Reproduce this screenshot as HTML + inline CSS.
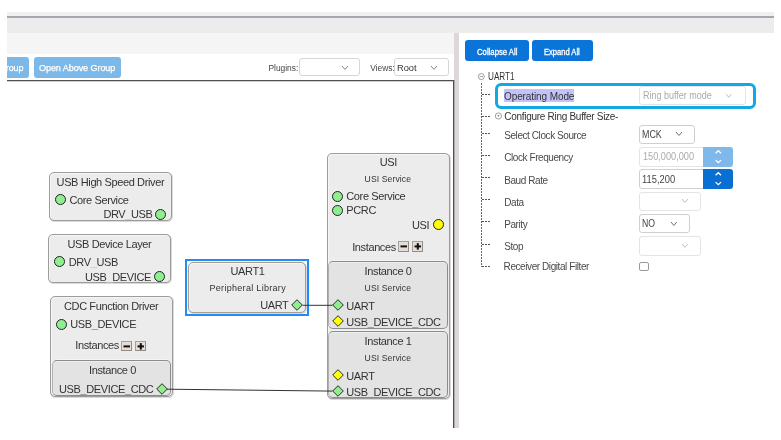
<!DOCTYPE html>
<html><head><meta charset="utf-8">
<style>
*{box-sizing:border-box;margin:0;padding:0}
html,body{width:781px;height:440px;overflow:hidden;background:#fff;will-change:transform;font-family:"Liberation Sans",sans-serif;position:relative}
.a{position:absolute}
.t{position:absolute;white-space:pre;line-height:1}
/* top band */
#band{left:7px;top:12px;width:767px;height:21px;background:#ececec}
#band .u{left:0;top:0;width:767px;height:4px;background:#f0f0f0}
#band .l{left:0;top:4px;width:767px;height:2px;background:#a6a6ae}
#tb{left:7px;top:33px;width:447px;height:21px;background:#f5f5f5}
#tb2{left:7px;top:54px;width:447px;height:26px;background:#fff}
#hl{left:7px;top:80px;width:447px;height:1px;background:#505050;box-shadow:0 1px 0 #d0d0d0}
#vl{left:453px;top:80px;width:1px;height:348px;background:#505050;box-shadow:1px 0 0 #aaa}
#split{left:454px;top:33px;width:5px;height:395px;background:#ddd7d7}
.btn{position:absolute;background:#7db9e8;border-radius:3px;color:#fff;font-size:9px;letter-spacing:-0.05px}
.dd{position:absolute;background:#fff;border:1px solid #d6d6d6;border-radius:3px}
.chev{position:absolute;width:5px;height:5px;border-right:1px solid #777;border-bottom:1px solid #777;transform:rotate(45deg)}
.lbl{position:absolute;white-space:pre;font-size:8.4px;color:#444;line-height:1}
/* nodes */
.node{position:absolute;background:#ececec;border:1px solid #9c9c9c;border-radius:5px;box-shadow:inset 1px 1px 0 #f6f6f6, 0.6px 0.6px 0 0.4px #dadada}
.inst{position:absolute;background:#e3e3e3;border:1px solid #8c8c8c;border-left-color:#b0b0b0;border-radius:5px;box-shadow:0 -1px 0 #f4f4f4, inset 0 1px 0 #eeeeee}
.nt{position:absolute;white-space:pre;font-size:11px;letter-spacing:-0.38px;color:#333;line-height:1}
.st{position:absolute;white-space:pre;font-size:8.6px;color:#333;line-height:1;letter-spacing:0.1px}
.pc{position:absolute;width:11px;height:11px;border-radius:50%;background:#90ee90;border:1.2px solid #222}
.py{background:#ffff00}
.pd{position:absolute;width:8px;height:8px;background:#90ee90;border:1px solid #333;transform:rotate(45deg)}
.pdy{background:#ffff00}
.ib{position:absolute;background:#e6ded6;border:1px solid #a8a098;border-right-color:#948c84;border-bottom-color:#948c84}
.ib svg{position:absolute;left:0;top:0}
/* right panel */
.rb{position:absolute;background:#0b74d8;border-radius:3px;color:#fff;font-size:7.3px;font-weight:bold;line-height:1}
.rl{position:absolute;white-space:pre;font-size:10px;letter-spacing:-0.42px;color:#4a4a4a;line-height:1}
.tv{position:absolute;border-left:1px dotted #333}
.th{position:absolute;border-top:1px dotted #333}
.rdd{position:absolute;background:#fff;border:1px solid #cfcfcf;border-radius:3px}
.rdd.dis{border-color:#e4e4e4}
.rv{position:absolute;white-space:pre;font-size:9.6px;letter-spacing:-0.34px;color:#454545;line-height:1}
.rchev{position:absolute;width:4px;height:4px;border-right:1px solid #666;border-bottom:1px solid #666;transform:rotate(45deg)}
.rchev.dis{border-color:#bbb}
</style></head><body>
<div id="band" class="a"><div class="a u"></div><div class="a l"></div></div>
<div id="tb" class="a"></div>
<div id="tb2" class="a"></div>
<div id="split" class="a"></div>

<!-- toolbar buttons -->
<div class="btn" style="left:7px;top:56.5px;width:22px;height:21.5px;border-radius:0 3px 3px 0;overflow:hidden"><span class="t" style="left:-32.5px;top:7.2px;font-size:9px;-webkit-text-stroke:0.25px #fff">Open Group</span></div>
<div class="btn" style="left:34px;top:56.5px;width:87px;height:21.5px"><span class="t" style="left:5px;top:7.2px;-webkit-text-stroke:0.25px #fff">Open Above Group</span></div>
<span class="lbl" style="left:268.5px;top:63.5px">Plugins:</span>
<div class="dd" style="left:298.8px;top:58.3px;width:61px;height:18px"></div>
<span class="lbl" style="left:370.2px;top:63.5px">Views:</span>
<div class="dd" style="left:394.2px;top:58.3px;width:54.5px;height:18px"><span class="t" style="left:1.8px;top:4.5px;font-size:9.3px;color:#333">Root</span></div>
<div id="hl" class="a"></div>
<div id="vl" class="a"></div>

<!-- canvas nodes -->
<!-- Node1 -->
<div class="node" style="left:49px;top:172px;width:123px;height:49px"></div>
<span class="nt" style="left:56.6px;top:177px">USB High Speed Driver</span>
<div class="pc" style="left:54.7px;top:194px"></div>
<span class="nt" style="left:69.5px;top:194.8px">Core Service</span>
<span class="nt" style="left:103.4px;top:209px">DRV<span style="color:#c4c4c4">_</span>USB</span>
<div class="pc" style="left:155.2px;top:208.5px"></div>

<!-- Node2 -->
<div class="node" style="left:48px;top:234px;width:123px;height:49px"></div>
<span class="nt" style="left:67.5px;top:239px">USB Device Layer</span>
<div class="pc" style="left:54.3px;top:256px"></div>
<span class="nt" style="left:68.8px;top:256.5px">DRV<span style="color:#c4c4c4">_</span>USB</span>
<span class="nt" style="left:85px;top:272px">USB<span style="color:#c4c4c4">_</span>DEVICE</span>
<div class="pc" style="left:154.2px;top:270.5px"></div>

<!-- Node3 -->
<div class="node" style="left:50px;top:296px;width:123px;height:101px"></div>
<span class="nt" style="left:64px;top:301px">CDC Function Driver</span>
<div class="pc" style="left:55.6px;top:318.5px"></div>
<span class="nt" style="left:70.2px;top:318.8px">USB<span style="color:#8a8a8a">_</span>DEVICE</span>
<span class="nt" style="left:75.3px;top:340.3px">Instances</span>
<div class="ib" style="left:121px;top:340.6px;width:11px;height:10.8px"></div><svg class="a" style="left:121px;top:340.6px" width="12" height="12"><rect x="2.5" y="4.4" width="6.5" height="2" fill="#111"/></svg>
<div class="ib" style="left:135.1px;top:340.6px;width:11px;height:10.8px"></div><svg class="a" style="left:135.1px;top:340.6px" width="12" height="12"><rect x="2.5" y="4.4" width="6.5" height="2" fill="#111"/><rect x="4.8" y="2.1" width="2" height="6.5" fill="#111"/></svg>
<div class="inst" style="left:52px;top:360px;width:119px;height:36px"></div>
<span class="nt" style="left:89px;top:364.7px">Instance 0</span>
<span class="nt" style="left:59px;top:384.3px">USB<span style="color:#8a8a8a">_</span>DEVICE<span style="color:#8a8a8a">_</span>CDC</span>
<svg class="a" style="left:154.5px;top:382.2px" width="14" height="14"><polygon points="1.7000000000000002,7 7,1.7000000000000002 12.3,7 7,12.3" fill="#90ee90" stroke="#2a2a2a" stroke-width="1"/></svg>

<!-- UART1 -->
<div class="a" style="left:185px;top:259px;width:124px;height:57px;border:2.4px solid #1e8cff"></div>
<div class="node" style="left:188px;top:262px;width:118px;height:51px;border-color:#a89c8c"></div>
<span class="nt" style="left:230.5px;top:265.6px">UART1</span>
<span class="st" style="left:209.5px;top:283.5px;font-size:9px;letter-spacing:0.3px">Peripheral Library</span>
<span class="nt" style="left:260.2px;top:300.3px">UART</span>
<svg class="a" style="left:290.4px;top:298.3px" width="14" height="14"><polygon points="1.7000000000000002,7 7,1.7000000000000002 12.3,7 7,12.3" fill="#90ee90" stroke="#2a2a2a" stroke-width="1"/></svg>

<!-- USI -->
<div class="node" style="left:327px;top:153px;width:123px;height:246px"></div>
<span class="nt" style="left:379.8px;top:157.3px">USI</span>
<span class="st" style="left:364.6px;top:175px">USI Service</span>
<div class="pc" style="left:332.3px;top:190.5px"></div>
<span class="nt" style="left:346.3px;top:191px">Core Service</span>
<div class="pc" style="left:332.3px;top:205px"></div>
<span class="nt" style="left:346.3px;top:205px">PCRC</span>
<span class="nt" style="left:412px;top:219.5px">USI</span>
<div class="pc py" style="left:432.7px;top:219.4px"></div>
<span class="nt" style="left:352.2px;top:241.5px">Instances</span>
<div class="ib" style="left:397.5px;top:241.2px;width:11px;height:10.8px"></div><svg class="a" style="left:397.5px;top:241.2px" width="12" height="12"><rect x="2.5" y="4.4" width="6.5" height="2" fill="#111"/></svg>
<div class="ib" style="left:412.2px;top:241.2px;width:11px;height:10.8px"></div><svg class="a" style="left:412.2px;top:241.2px" width="12" height="12"><rect x="2.5" y="4.4" width="6.5" height="2" fill="#111"/><rect x="4.8" y="2.1" width="2" height="6.5" fill="#111"/></svg>

<div class="inst" style="left:328px;top:261px;width:120px;height:68px"></div>
<span class="nt" style="left:364.6px;top:266px">Instance 0</span>
<span class="st" style="left:364.6px;top:283.5px">USI Service</span>
<svg class="a" style="left:330.8px;top:298.3px" width="14" height="14"><polygon points="1.7000000000000002,7 7,1.7000000000000002 12.3,7 7,12.3" fill="#90ee90" stroke="#2a2a2a" stroke-width="1"/></svg>
<span class="nt" style="left:346.3px;top:301px">UART</span>
<svg class="a" style="left:330.8px;top:314.2px" width="14" height="14"><polygon points="1.7000000000000002,7 7,1.7000000000000002 12.3,7 7,12.3" fill="#ffff00" stroke="#2a2a2a" stroke-width="1"/></svg>
<span class="nt" style="left:346.3px;top:316.5px">USB<span style="color:#8a8a8a">_</span>DEVICE<span style="color:#8a8a8a">_</span>CDC</span>

<div class="inst" style="left:328px;top:331px;width:120px;height:67px"></div>
<span class="nt" style="left:364.6px;top:336px">Instance 1</span>
<span class="st" style="left:364.6px;top:353.8px">USI Service</span>
<svg class="a" style="left:330.8px;top:368.3px" width="14" height="14"><polygon points="1.7000000000000002,7 7,1.7000000000000002 12.3,7 7,12.3" fill="#ffff00" stroke="#2a2a2a" stroke-width="1"/></svg>
<span class="nt" style="left:346.3px;top:371px">UART</span>
<svg class="a" style="left:330.8px;top:384.1px" width="14" height="14"><polygon points="1.7000000000000002,7 7,1.7000000000000002 12.3,7 7,12.3" fill="#90ee90" stroke="#2a2a2a" stroke-width="1"/></svg>
<span class="nt" style="left:346.3px;top:386.5px">USB<span style="color:#8a8a8a">_</span>DEVICE<span style="color:#8a8a8a">_</span>CDC</span>

<!-- connection lines -->
<svg class="a" style="left:0;top:0" width="781" height="440">
<line x1="302.7" y1="305.3" x2="332.5" y2="305.3" stroke="#333" stroke-width="1"/>
<line x1="166.8" y1="389.2" x2="332.5" y2="391.1" stroke="#333" stroke-width="1"/>
</svg>

<!-- right panel -->
<div class="rb" style="left:465px;top:40px;width:64px;height:21px"><span class="t" style="left:12px;top:8.2px;font-size:8.6px;font-weight:normal;-webkit-text-stroke:0.3px #fff;transform:scaleX(0.9);transform-origin:0 0">Collapse All</span></div>
<div class="rb" style="left:532px;top:40px;width:60.6px;height:21px"><span class="t" style="left:12.4px;top:8.2px;font-size:8.6px;font-weight:normal;-webkit-text-stroke:0.3px #fff;transform:scaleX(0.88);transform-origin:0 0">Expand All</span></div>

<svg class="a" style="left:477px;top:72.4px" width="9" height="9"><circle cx="4.3" cy="4.6" r="3" fill="none" stroke="#777" stroke-width="0.7"/><line x1="2.6" y1="4.6" x2="6" y2="4.6" stroke="#777" stroke-width="0.7"/></svg>
<span class="rl" style="left:487.8px;top:71.2px;font-size:10.7px;letter-spacing:0;color:#333;transform:scaleX(0.765);transform-origin:0 0">UART1</span>

<svg class="a" style="left:476px;top:80px" width="20" height="200"><line x1="5.5" y1="3" x2="5.5" y2="187" stroke="#666" stroke-width="1" stroke-dasharray="2,1"/><line x1="6" y1="14.5" x2="14" y2="14.5" stroke="#555" stroke-width="1" stroke-dasharray="2,1"/><line x1="6" y1="36.5" x2="14" y2="36.5" stroke="#555" stroke-width="1" stroke-dasharray="2,1"/><line x1="6" y1="53.5" x2="14" y2="53.5" stroke="#555" stroke-width="1" stroke-dasharray="2,1"/><line x1="6" y1="75.5" x2="14" y2="75.5" stroke="#555" stroke-width="1" stroke-dasharray="2,1"/><line x1="6" y1="97.5" x2="14" y2="97.5" stroke="#555" stroke-width="1" stroke-dasharray="2,1"/><line x1="6" y1="119.5" x2="14" y2="119.5" stroke="#555" stroke-width="1" stroke-dasharray="2,1"/><line x1="6" y1="141.5" x2="14" y2="141.5" stroke="#555" stroke-width="1" stroke-dasharray="2,1"/><line x1="6" y1="164.5" x2="14" y2="164.5" stroke="#555" stroke-width="1" stroke-dasharray="2,1"/><line x1="6" y1="186.5" x2="14" y2="186.5" stroke="#555" stroke-width="1" stroke-dasharray="2,1"/></svg>

<div class="a" style="left:495px;top:83px;width:261.2px;height:25.8px;border:3px solid #14a7e6;border-radius:6px"></div>
<div class="a" style="left:503.8px;top:89px;width:70.5px;height:13px;background:#c3c3fa"></div>
<span class="rl" style="left:504px;top:91.8px;font-size:10px;letter-spacing:-0.1px;color:#333">Operating Mode</span>
<div class="rdd dis" style="left:639px;top:86px;width:107px;height:19px"><span class="t" style="left:2.6px;top:4px;font-size:10px;color:#aaa;transform:scaleX(0.9);transform-origin:0 0">Ring buffer mode</span></div>

<svg class="a" style="left:493.5px;top:111.5px" width="9" height="9"><circle cx="4.4" cy="4" r="3.1" fill="none" stroke="#888" stroke-width="0.8"/><polygon points="3.2,3.3 5.6,3.3 4.4,4.8" fill="#666"/></svg>
<span class="rl" style="left:504.2px;top:111.8px;color:#333;letter-spacing:-0.28px">Configure Ring Buffer Size-</span>

<span class="rl" style="left:504.2px;top:131px">Select Clock Source</span>
<div class="rdd" style="left:639px;top:125px;width:56px;height:19px"><span class="t" style="left:2.2px;top:3.8px;font-size:10px;color:#454545;transform:scaleX(0.89);transform-origin:0 0">MCK</span></div>

<span class="rl" style="left:504.2px;top:153px">Clock Frequency</span>
<div class="rdd dis" style="left:639px;top:147px;width:64.5px;height:20px;border-radius:3px 0 0 3px"><span class="t" style="left:2.6px;top:4.1px;font-size:10px;color:#aaa;transform:scaleX(0.917);transform-origin:0 0">150,000,000</span></div>
<div class="a" style="left:703px;top:147px;width:30.2px;height:20px;background:#7fb9ec;border-radius:0 3px 3px 0"><svg width="30" height="20"><polyline points="12.6,6.3 15.3,3.7 18,6.3" fill="none" stroke="#fff" stroke-width="1.2"/><polyline points="12.6,13.1 15.3,15.7 18,13.1" fill="none" stroke="#fff" stroke-width="1.2"/></svg></div>

<span class="rl" style="left:504.2px;top:175.5px">Baud Rate</span>
<div class="rdd" style="left:639px;top:169px;width:64.5px;height:20px;border-radius:3px 0 0 3px"><span class="t" style="left:2.4px;top:4.6px;font-size:10px;color:#454545;transform:scaleX(0.935);transform-origin:0 0">115,200</span></div>
<div class="a" style="left:703px;top:169px;width:30.2px;height:20px;background:#0a6fd2;border-radius:0 3px 3px 0"><svg width="30" height="20"><polyline points="12.6,6.3 15.3,3.7 18,6.3" fill="none" stroke="#fff" stroke-width="1.2"/><polyline points="12.6,13.1 15.3,15.7 18,13.1" fill="none" stroke="#fff" stroke-width="1.2"/></svg></div>

<span class="rl" style="left:504.2px;top:197.5px">Data</span>
<div class="rdd dis" style="left:639px;top:192px;width:62px;height:19px"></div>

<span class="rl" style="left:504.2px;top:220px">Parity</span>
<div class="rdd" style="left:639px;top:214px;width:51px;height:19px"><span class="t" style="left:2.4px;top:4.3px;font-size:10px;color:#454545;transform:scaleX(0.87);transform-origin:0 0">NO</span></div>

<span class="rl" style="left:504.2px;top:242px">Stop</span>
<div class="rdd dis" style="left:639px;top:236px;width:62px;height:20px"></div>

<span class="rl" style="left:503.6px;top:261.5px">Receiver Digital Filter</span>
<div class="a" style="left:639px;top:261.7px;width:10px;height:9.5px;border:1px solid #999;border-radius:2px;background:#fff"></div>

<!-- chevrons -->
<svg class="a" style="left:340.6px;top:64.5px;overflow:visible" width="8.0" height="5.400000000000006"><polyline points="1,1 4.0,4.400000000000006 7.0,1" fill="none" stroke="#777" stroke-width="0.9"/></svg>
<svg class="a" style="left:429.6px;top:64.5px;overflow:visible" width="8.0" height="5.400000000000006"><polyline points="1,1 4.0,4.400000000000006 7.0,1" fill="none" stroke="#777" stroke-width="0.9"/></svg>
<svg class="a" style="left:725.3px;top:92.5px;overflow:visible" width="7.5" height="5.299999999999997"><polyline points="1,1 3.75,4.299999999999997 6.5,1" fill="none" stroke="#c0c0c0" stroke-width="1"/></svg>
<svg class="a" style="left:675.1px;top:131.2px;overflow:visible" width="8.0" height="5.5"><polyline points="1,1 4.0,4.5 7.0,1" fill="none" stroke="#707070" stroke-width="1"/></svg>
<svg class="a" style="left:681.3px;top:198.2px;overflow:visible" width="7.800000000000068" height="5.400000000000006"><polyline points="1,1 3.900000000000034,4.400000000000006 6.800000000000068,1" fill="none" stroke="#c0c0c0" stroke-width="1"/></svg>
<svg class="a" style="left:669.7px;top:220.5px;overflow:visible" width="7.699999999999932" height="5.5"><polyline points="1,1 3.849999999999966,4.5 6.699999999999932,1" fill="none" stroke="#707070" stroke-width="1"/></svg>
<svg class="a" style="left:681.3px;top:242.6px;overflow:visible" width="7.800000000000068" height="5.400000000000006"><polyline points="1,1 3.900000000000034,4.400000000000006 6.800000000000068,1" fill="none" stroke="#c0c0c0" stroke-width="1"/></svg>
</body></html>
